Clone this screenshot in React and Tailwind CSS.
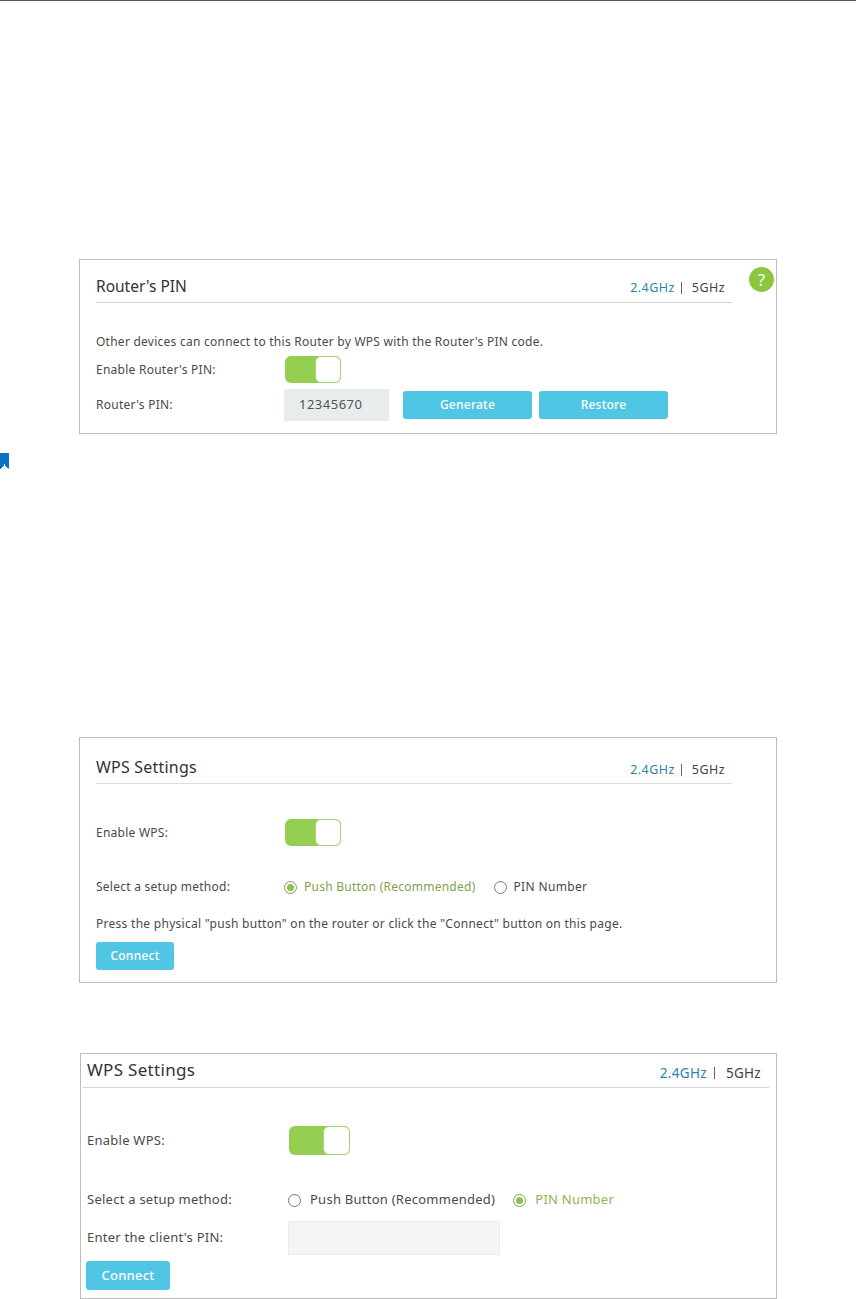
const F = { fontFamily: '"Noto Sans", "DejaVu Sans", sans-serif' };

function Toggle({ big }) {
  return (
    <div className={big ? "flex w-[61px] h-[29px] rounded-[6px] bg-[#94cf52] justify-end" : "flex w-[56px] h-[27px] rounded-[6px] bg-[#94cf52] justify-end"}>
      <div className={big ? "w-[27px] h-full rounded-[6px] bg-white border border-[#a5d46f]" : "w-[26px] h-full rounded-[6px] bg-white border border-[#a5d46f]"} />
    </div>
  );
}

function Radio({ on }) {
  return (
    <span className={on ? "flex items-center justify-center w-[13px] h-[13px] rounded-full border border-[#7fa24d]" : "flex items-center justify-center w-[13px] h-[13px] rounded-full border border-[#777]"}>
      {on && <span className="w-[7px] h-[7px] rounded-full bg-[#8cc04f]" />}
    </span>
  );
}

function Bands({ big }) {
  return (
    <div className={big ? "flex items-center text-[13.5px] text-[#444] tracking-[0.3px]" : "flex items-center text-[12.5px] text-[#444] tracking-[0.45px]"}>
      <span className="text-[#2b86a6]">2.4GHz</span>
      <span className={big ? "ml-[7px] mr-[11px] w-px h-[12px] bg-[#666]" : "ml-[6px] mr-[10px] w-px h-[12px] bg-[#666]"} />
      <span>5GHz</span>
    </div>
  );
}

function Btn({ children, w }) {
  return (
    <button className={`${w} h-[28px] rounded-[3px] bg-[#50c5e4] text-white text-[12px] font-medium`}>{children}</button>
  );
}

export default function App() {
  return (
    <div className="w-[856px] h-[1299px] bg-white text-[#4a4a4a] overflow-hidden tracking-[0.25px]" style={F}>
      <div className="h-px bg-[#555]" />

      <div className="relative mt-[258px] ml-[79px] w-[698px] h-[175px] border border-[#bdbdbd] pl-[16px]">
        <div className="flex w-[636px] h-[43px] justify-between border-b border-[#d4d4d4]">
          <span className="mt-[15px] text-[15.5px] leading-[22px] text-[#333] tracking-normal">Router's PIN</span>
          <div className="mt-[19px] pr-[7px]"><Bands /></div>
        </div>
        <p className="mt-[29px] text-[12px] leading-[20px]">Other devices can connect to this Router by WPS with the Router's PIN code.</p>
        <div className="flex items-center h-[27px] mt-[4px] text-[12px]">
          <span className="w-[189px]">Enable Router's PIN:</span>
          <Toggle />
        </div>
        <div className="flex items-center h-[32px] mt-[6px] text-[12px]">
          <span className="w-[188px]">Router's PIN:</span>
          <div className="flex items-center w-[105px] h-[32px] bg-[#e9ecec] pl-[15px] text-[13px] text-[#555] tracking-[0.5px]">12345670</div>
          <div className="flex gap-[7px] ml-[14px]">
            <Btn w="w-[129px]">Generate</Btn>
            <Btn w="w-[129px]">Restore</Btn>
          </div>
        </div>
        <div className="absolute left-[669px] top-[7px] flex items-center justify-center w-[25px] h-[25px] rounded-full bg-[#8cc63f] text-white text-[17px] leading-none">?</div>
      </div>

      <svg className="mt-[19px] block" width="10" height="17" viewBox="0 0 10 17">
        <path d="M0 0H9V16L8 15H7V14H6V13H5V11H4V13H3V14H2V15H1V16H0Z" fill="#0a71c4" />
      </svg>

      <div className="mt-[267px] ml-[79px] w-[698px] h-[246px] border border-[#bdbdbd] pl-[16px]">
        <div className="flex w-[636px] h-[46px] justify-between border-b border-[#dcdcdc]">
          <span className="mt-[17px] text-[16px] leading-[24px] text-[#333] tracking-[0.2px]">WPS Settings</span>
          <div className="mt-[23px] pr-[7px]"><Bands /></div>
        </div>
        <div className="flex items-center h-[27px] mt-[35px] text-[12px]">
          <span className="w-[189px]">Enable WPS:</span>
          <Toggle />
        </div>
        <div className="flex items-center h-[20px] mt-[31px] text-[12px]">
          <span className="w-[188px]">Select a setup method:</span>
          <Radio on />
          <span className="ml-[7px] text-[#7fa24d]">Push Button (Recommended)</span>
          <span className="ml-[18px]"><Radio /></span>
          <span className="ml-[7px] tracking-[0.35px]">PIN Number</span>
        </div>
        <p className="mt-[17px] text-[12px] leading-[20px] tracking-[0.28px]">Press the physical "push button" on the router or click the "Connect" button on this page.</p>
        <div className="mt-[8px]"><Btn w="w-[78px]">Connect</Btn></div>
      </div>

      <div className="mt-[70px] ml-[80px] w-[697px] h-[246px] border border-[#bdbdbd] pl-[5px]">
        <div className="flex w-[686px] -ml-[3px] pl-[4px] h-[34px] justify-between border-b border-[#d4d4d4]">
          <span className="mt-[3px] text-[17px] leading-[26px] text-[#333] tracking-[0.3px]">WPS Settings</span>
          <div className="mt-[9px] pr-[8px]"><Bands big /></div>
        </div>
        <div className="flex items-center h-[29px] mt-[38px] text-[13px]">
          <span className="w-[203px] pl-px">Enable WPS:</span>
          <Toggle big />
        </div>
        <div className="flex items-center h-[20px] mt-[35px] text-[13px]">
          <span className="w-[202px] pl-px">Select a setup method:</span>
          <Radio />
          <span className="ml-[9px]">Push Button (Recommended)</span>
          <span className="ml-[18px]"><Radio on /></span>
          <span className="ml-[9px] text-[#8cb454]">PIN Number</span>
        </div>
        <div className="flex items-center h-[34px] mt-[11px] text-[13px]">
          <span className="w-[202px] pl-px">Enter the client's PIN:</span>
          <div className="w-[212px] h-full bg-[#f5f5f5] border border-[#ececec]" />
        </div>
        <div className="mt-[6px]"><button className="w-[84px] h-[29px] rounded-[3px] bg-[#50c5e4] text-white text-[13px] font-medium">Connect</button></div>
      </div>
    </div>
  );
}
